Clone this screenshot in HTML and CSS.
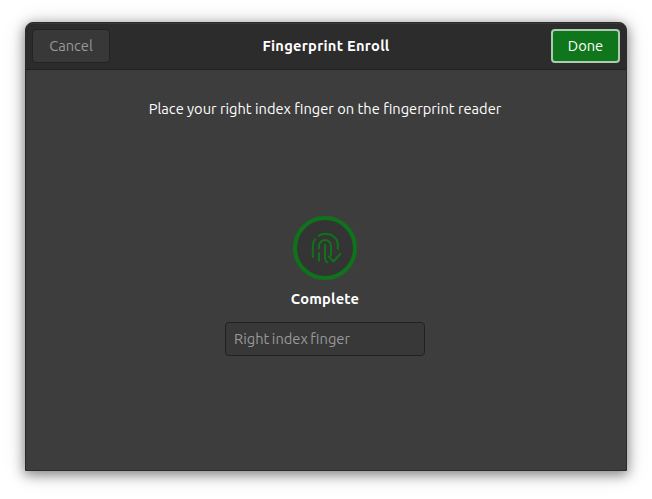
FILE: index.html
```html
<!DOCTYPE html>
<html lang="en">
<head>
<meta charset="utf-8">
<title>Fingerprint Enroll</title>
<link rel="stylesheet" href="styles.css">
</head>
<body>
<main class="window">
  <header class="titlebar">
    <button class="button cancel"><span class="cancel-text">Cancel</span></button>
    <h1 class="title"><span class="title-text">Fingerprint Enroll</span></h1>
    <button class="button done"><span class="done-text">Done</span></button>
  </header>
  <section class="content">
    <p class="instruction"><span class="instruction-text">Place your right index finger on the fingerprint reader</span></p>
    <div class="ring">
      <svg class="fingerprint" viewBox="0 0 64 64" width="64" height="64">
        <path d="M25.8 19.6C34 14.8 44.8 19.8 44.8 29V33M22.2 23.2C20.3 25.5 19.8 27.5 19.8 30V41M26 32.5V30a6 6 0 0 1 12 0V39.5M26 37V44.8M32 29V41.5Q32 44.8 34.3 46.5M35.8 40.4L40.4 45.6L47.4 37.8"/>
      </svg>
    </div>
    <p class="status"><span class="status-text">Complete</span></p>
    <div class="entry"><span class="entry-text">Right index finger</span></div>
  </section>
</main>
</body>
</html>
```
FILE: styles.css
```css
* { box-sizing: border-box; }
body {
  margin: 0;
  padding: 22px 25px 28px;
  height: 499px;
  overflow: hidden;
  background: #fff;
  font: 14.67px/20px Ubuntu, "Noto Sans", sans-serif;
  color: #fff;
}
.window {
  display: flex;
  flex-direction: column;
  width: 602px;
  height: 449px;
  border: 1px solid #2b2b2b;
  border-radius: 8px 8px 0 0;
  background: #3d3d3d;
  box-shadow: 0 3px 12px 1px rgba(0, 0, 0, .42), 0 2px 24px rgba(0, 0, 0, .14);
  overflow: hidden;
}
.titlebar {
  display: flex;
  justify-content: space-between;
  height: 47px;
  padding: 6px;
  background: #2c2c2c;
  border-bottom: 1px solid #212121;
  box-shadow: inset 0 1px #383838;
}
.button {
  height: 34px;
  padding: 0;
  border: 1px solid #232323;
  border-radius: 4px;
  font: inherit;
  white-space: nowrap;
}
.cancel { width: 78px; background: #383838; color: #999; }
.done { width: 69px; background: #0f761b; border: 2px solid #aecab1; color: #fff; }
.title {
  flex: 1;
  margin: 0 0 0 -9px;
  font-size: 14.67px;
  line-height: 34px;
  letter-spacing: .28px;
  text-align: center;
  white-space: nowrap;
}
.content { display: flex; flex-direction: column; align-items: center; padding-right: 2px; }
.instruction { margin: 29px 0 0; white-space: nowrap; }
.ring {
  width: 64px;
  height: 64px;
  margin-top: 97px;
  border: 4px solid #0e731a;
  border-radius: 50%;
  background: #343434;
}
.fingerprint {
  display: block;
  margin: -4px;
  fill: none;
  stroke: #0e731a;
  stroke-width: 2;
  stroke-linecap: round;
  stroke-linejoin: round;
}
.status { margin: 9px 0 0; font-weight: 700; letter-spacing: .2px; }
.entry {
  width: 200px;
  height: 34px;
  margin-top: 13px;
  padding: 6px 8px;
  border: 1px solid #212121;
  border-radius: 4px;
  background: #383838;
  color: #999;
  word-spacing: -.8px;
}
```
